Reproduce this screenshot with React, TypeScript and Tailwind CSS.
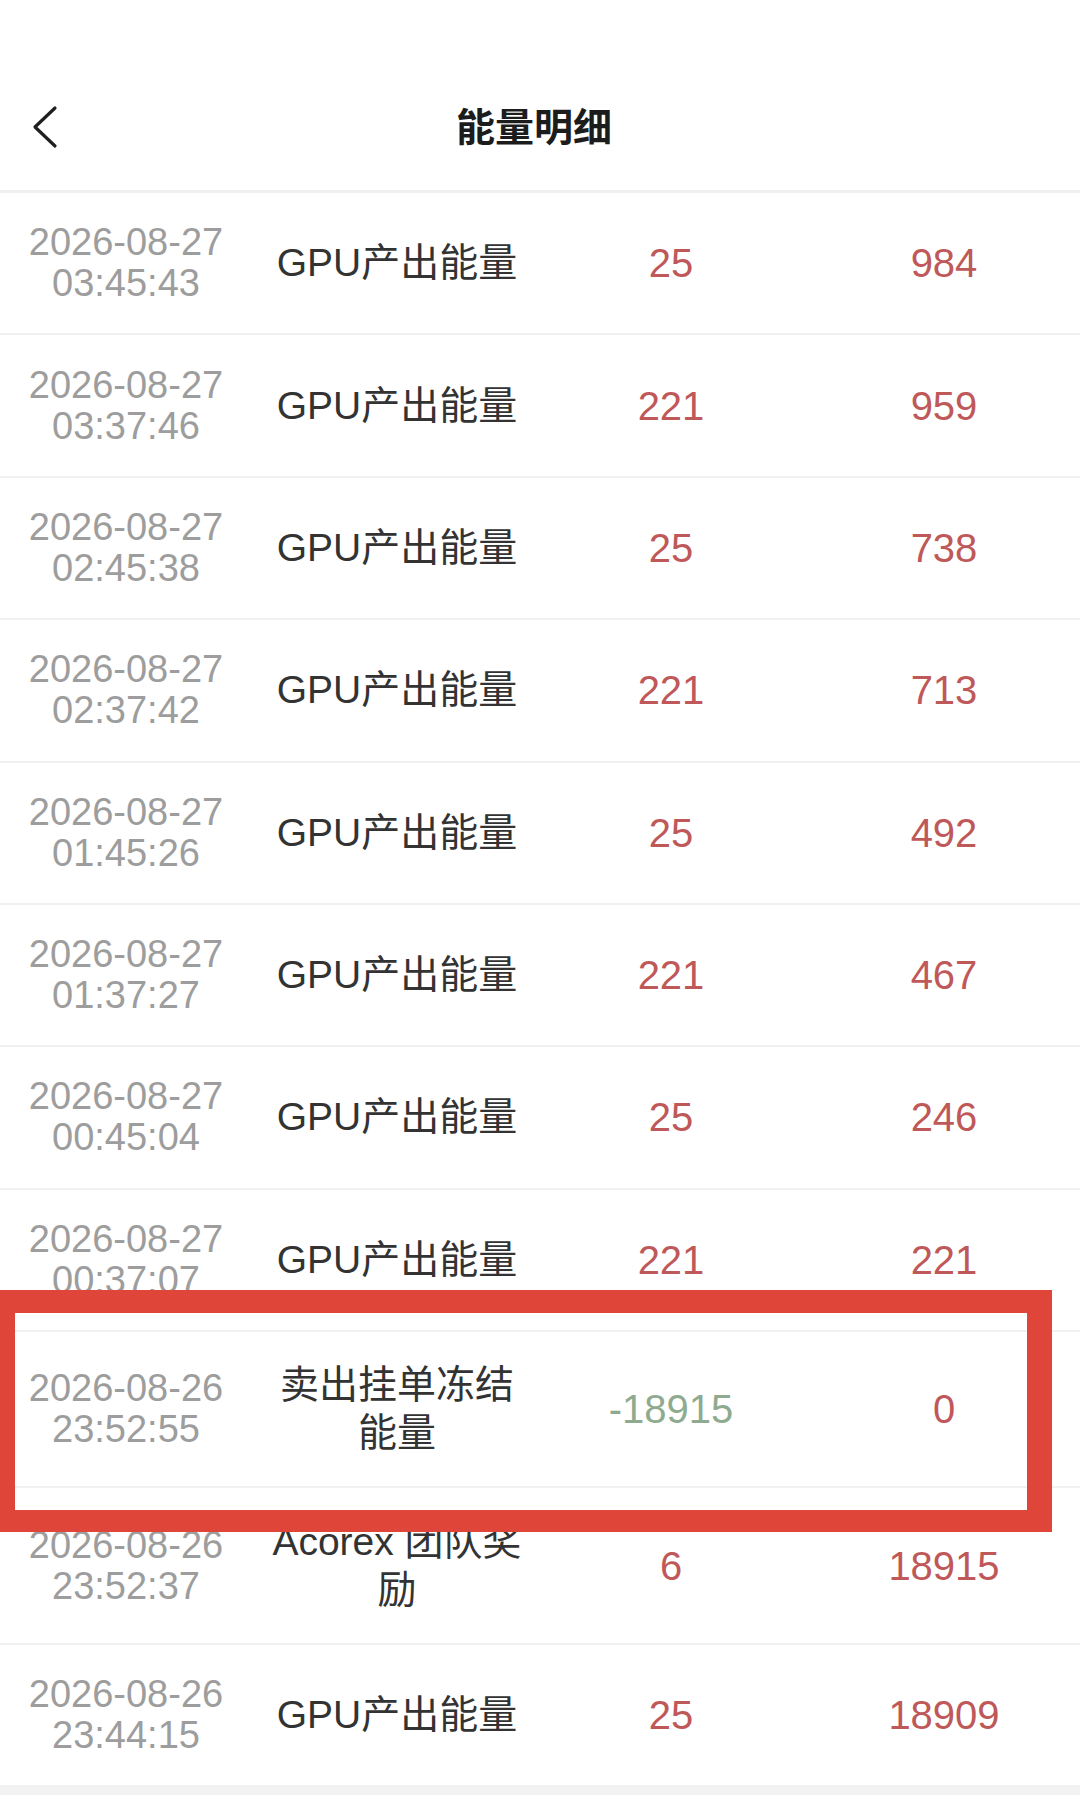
import React from "react";

type Row = {
  date: string;
  time: string;
  desc: string;
  amount: string;
  balance: string;
  negative?: boolean;
};

const rows: Row[] = [
  { date: "2026-08-27", time: "03:45:43", desc: "GPU产出能量", amount: "25", balance: "984" },
  { date: "2026-08-27", time: "03:37:46", desc: "GPU产出能量", amount: "221", balance: "959" },
  { date: "2026-08-27", time: "02:45:38", desc: "GPU产出能量", amount: "25", balance: "738" },
  { date: "2026-08-27", time: "02:37:42", desc: "GPU产出能量", amount: "221", balance: "713" },
  { date: "2026-08-27", time: "01:45:26", desc: "GPU产出能量", amount: "25", balance: "492" },
  { date: "2026-08-27", time: "01:37:27", desc: "GPU产出能量", amount: "221", balance: "467" },
  { date: "2026-08-27", time: "00:45:04", desc: "GPU产出能量", amount: "25", balance: "246" },
  { date: "2026-08-27", time: "00:37:07", desc: "GPU产出能量", amount: "221", balance: "221" },
  { date: "2026-08-26", time: "23:52:55", desc: "卖出挂单冻结能量", amount: "-18915", balance: "0", negative: true },
  { date: "2026-08-26", time: "23:52:37", desc: "Acorex 团队奖励", amount: "6", balance: "18915" },
  { date: "2026-08-26", time: "23:44:15", desc: "GPU产出能量", amount: "25", balance: "18909" },
];

const font = { fontFamily: '"Liberation Sans", "Noto Sans CJK SC", sans-serif' };

export default function App() {
  return (
    <div className="relative min-h-screen w-[1080px] bg-[#f2f2f2] overflow-hidden" style={font}>
      <div className="bg-white">
        <div className="pt-[64px]">
          <div className="relative flex h-[129px] items-center justify-center border-b-[3px] border-[#f0f0f0] pr-[12px]">
            <svg
              className="absolute left-[30px] top-1/2 -translate-y-1/2"
              width="32"
              height="46"
              viewBox="0 0 32 46"
              fill="none"
            >
              <path
                d="M25 4 L5 23 L25 42"
                stroke="#1f1f1f"
                strokeWidth="3.2"
                strokeLinecap="round"
                strokeLinejoin="round"
              />
            </svg>
            <span className="text-[39px] font-bold text-[#1c1c1c] leading-none">能量明细</span>
          </div>
        </div>
        <div>
          {rows.map((r, i) => (
            <div
              key={i}
              className="grid grid-cols-[252px_290px_258px_280px] items-center border-b-2 border-[#f1f1f1] py-[29.2px]"
            >
              <div className="flex flex-col items-center text-[38px] leading-[41px] text-[#9d9d9d]">
                <span>{r.date}</span>
                <span>{r.time}</span>
              </div>
              <div className="px-[13px] text-center text-[39px] leading-[48px] text-[#333333]">
                {r.desc}
              </div>
              <div
                className={
                  r.negative
                    ? "text-center text-[40px] leading-[48px] text-[#8fab8f]"
                    : "text-center text-[40px] leading-[48px] text-[#bf5859]"
                }
              >
                {r.amount}
              </div>
              <div className="pl-[8px] text-center text-[40px] leading-[48px] text-[#bf5859]">
                {r.balance}
              </div>
            </div>
          ))}
        </div>
      </div>
      <div className="absolute left-0 top-[1290px] h-[242px] w-[1052px] border-t-[23px] border-r-[25px] border-b-[22px] border-l-[15px] border-[#df4539]" />
    </div>
  );
}
